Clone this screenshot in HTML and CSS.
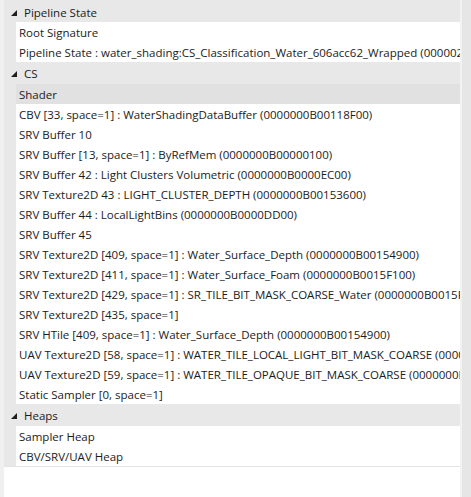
FILE: index.html
```html
<!DOCTYPE html>
<html lang="en">
<head>
    <meta charset="UTF-8">
    <title>Pipeline State</title>
    <link rel="stylesheet" href="styles.css">
</head>
<body>
    <div class="panel">
        <div class="tree">
            <!-- Pipeline State -->
            <div class="group-head first"><svg class="arrow" width="6" height="6" viewBox="0 0 6 6"><polygon points="6,0 6,6 0,6"/></svg>Pipeline State</div>
            <ul class="items">
                <li>Root Signature</li>
                <li>Pipeline State : water_shading:CS_Classification_Water_606acc62_Wrapped (0000027A3D4E5F00)</li>
            </ul>

            <!-- CS -->
            <div class="group-head"><svg class="arrow" width="6" height="6" viewBox="0 0 6 6"><polygon points="6,0 6,6 0,6"/></svg>CS</div>
            <ul class="items">
                <li class="selected">Shader</li>
                <li>CBV [33, space=1] : WaterShadingDataBuffer (0000000B00118F00)</li>
                <li>SRV Buffer 10</li>
                <li>SRV Buffer [13, space=1] : ByRefMem (0000000B00000100)</li>
                <li>SRV Buffer 42 : Light Clusters Volumetric (0000000B0000EC00)</li>
                <li>SRV Texture2D 43 : LIGHT_CLUSTER_DEPTH (0000000B00153600)</li>
                <li>SRV Buffer 44 : LocalLightBins (0000000B0000DD00)</li>
                <li>SRV Buffer 45</li>
                <li>SRV Texture2D [409, space=1] : Water_Surface_Depth (0000000B00154900)</li>
                <li>SRV Texture2D [411, space=1] : Water_Surface_Foam (0000000B0015F100)</li>
                <li>SRV Texture2D [429, space=1] : SR_TILE_BIT_MASK_COARSE_Water (0000000B0015F800)</li>
                <li>SRV Texture2D [435, space=1]</li>
                <li>SRV HTile [409, space=1] : Water_Surface_Depth (0000000B00154900)</li>
                <li>UAV Texture2D [58, space=1] : WATER_TILE_LOCAL_LIGHT_BIT_MASK_COARSE (0000000B00160000)</li>
                <li>UAV Texture2D [59, space=1] : WATER_TILE_OPAQUE_BIT_MASK_COARSE (0000000B00161000)</li>
                <li>Static Sampler [0, space=1]</li>
            </ul>

            <!-- Heaps -->
            <div class="group-head"><svg class="arrow" width="6" height="6" viewBox="0 0 6 6"><polygon points="6,0 6,6 0,6"/></svg>Heaps</div>
            <ul class="items">
                <li>Sampler Heap</li>
                <li>CBV/SRV/UAV Heap</li>
            </ul>

            <div class="filler"></div>
        </div>
        <div class="gutter"></div>
    </div>
</body>
</html>
```

FILE: styles.css
```css
/* Basic Reset */
* { box-sizing: border-box; margin: 0; padding: 0; }

body {
    background-color: #f0f0f0;
    font-family: "Open Sans", "Noto Sans", sans-serif;
    font-size: 11.5px;
    color: #1b1b1b;
}

/* Panel */
.panel {
    display: grid;
    grid-template-columns: 1fr 11px;
    height: 497px;
    margin-left: 4px;
    background-color: #e8e8e8;
}

.tree {
    display: flex;
    flex-direction: column;
    min-width: 0;
}

.gutter {
    border-left: 2px solid #f2f2f2;
    background-color: #e6e6e6;
}

/* Group headers */
.group-head {
    height: 22px;
    display: flex;
    align-items: center;
    padding-left: 7px;
    padding-top: 1px;
    white-space: nowrap;
}

.group-head.first {
    padding-top: 3px;
}

.arrow {
    fill: #1e1e1e;
    margin-right: 7px;
    margin-top: 1px;
}

/* Child rows */
.items {
    list-style: none;
    margin-left: 12px;
    background-color: #fff;
}

.items li {
    height: 20px;
    line-height: 21px;
    padding-left: 3px;
    white-space: nowrap;
    overflow: hidden;
}

.items li.selected {
    background-color: #e1e1e1;
}

.filler {
    flex: 1;
    background-color: #fff;
    border-top: 1px solid #e4e4e4;
}
```
